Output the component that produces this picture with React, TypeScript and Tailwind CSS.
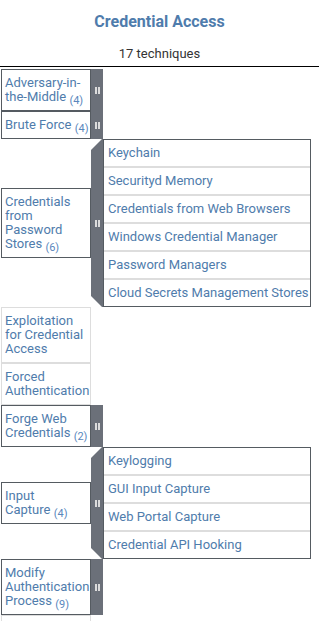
type Technique = {
  name: string
  count?: number
  subs?: string[]
  expanded?: boolean
}

const techniques: Technique[] = [
  { name: 'Adversary-in-the-Middle', count: 4, subs: [] },
  { name: 'Brute Force', count: 4, subs: [] },
  {
    name: 'Credentials from Password Stores',
    count: 6,
    expanded: true,
    subs: [
      'Keychain',
      'Securityd Memory',
      'Credentials from Web Browsers',
      'Windows Credential Manager',
      'Password Managers',
      'Cloud Secrets Management Stores',
    ],
  },
  { name: 'Exploitation for Credential Access' },
  { name: 'Forced Authentication' },
  { name: 'Forge Web Credentials', count: 2, subs: [] },
  {
    name: 'Input Capture',
    count: 4,
    expanded: true,
    subs: ['Keylogging', 'GUI Input Capture', 'Web Portal Capture', 'Credential API Hooking'],
  },
  { name: 'Modify Authentication Process', count: 9, subs: [] },
  { name: 'Multi-Factor Authentication Interception' },
  { name: 'Multi-Factor Authentication Request Generation' },
  { name: 'Network Sniffing' },
  { name: 'OS Credential Dumping', count: 8, subs: [] },
]

function TechniqueName({ name, count }: { name: string; count?: number }) {
  if (count === undefined) return <>{name}</>
  // keep the last word glued to its count so they never split
  const cut = Math.max(name.lastIndexOf(' '), name.lastIndexOf('-'))
  const head = name.slice(0, cut + 1)
  const last = name.slice(cut + 1)
  return (
    <>
      {head}
      <span className="whitespace-nowrap">
        {last}
        {'\u00a0'}
        <span className="relative top-[3px] text-[11px] leading-none text-[#5a87bd]">({count})</span>
      </span>
    </>
  )
}

function Grip() {
  return (
    <div className="flex gap-px">
      <span className="h-[7px] w-[2px] bg-[#dcdcdc]" />
      <span className="h-[7px] w-[2px] bg-[#dcdcdc]" />
    </div>
  )
}

function TechniqueRow({ t }: { t: Technique }) {
  const isSuper = t.subs !== undefined
  return (
    <div className={t.expanded ? 'flex items-center' : 'flex'}>
      <div
        className={`w-[90px] shrink-0 border pt-[6px] pb-[6px] pl-[3px] text-[13px] leading-[14px] text-[#4f7cac] ${
          isSuper ? 'border-[#555b61]' : 'border-[#dddddd]'
        }`}
      >
        <TechniqueName name={t.name} count={t.count} />
      </div>
      {isSuper && !t.expanded && (
        <div className="flex w-[12px] shrink-0 items-center justify-center bg-[#6b7079]">
          <Grip />
        </div>
      )}
      {t.expanded && (
        <>
          <div className="flex w-[12px] shrink-0 self-stretch items-center justify-center bg-[#6b7079] [clip-path:polygon(11px_0,100%_0,100%_100%,11px_100%,0_calc(100%_-_11px),0_11px)]">
            <Grip />
          </div>
          <div className="w-[208px] shrink-0 border border-[#555b61]">
            {t.subs!.map((s, i) => (
              <div
                key={s}
                className={`flex h-[26px] items-center whitespace-nowrap pl-[4px] text-[13px] leading-[14px] text-[#4f7cac] ${
                  i > 0 ? 'h-[28px] border-t-2 border-[#dddddd]' : ''
                }`}
              >
                {s}
              </div>
            ))}
          </div>
        </>
      )}
    </div>
  )
}

export default function App() {
  return (
    <div className="min-h-screen bg-white font-[Roboto,sans-serif]">
      <div className="border-b border-black pb-[4px] text-center">
        <div className="pt-[12px] text-[16px] leading-[20px] font-bold text-[#4f7cac]">
          Credential Access
        </div>
        <div className="mt-[14px] text-[13px] leading-[16px] text-[#333333]">17 techniques</div>
      </div>
      <div className="mt-[2px] flex flex-col pl-px">
        {techniques.map((t) => (
          <TechniqueRow key={t.name} t={t} />
        ))}
      </div>
    </div>
  )
}
